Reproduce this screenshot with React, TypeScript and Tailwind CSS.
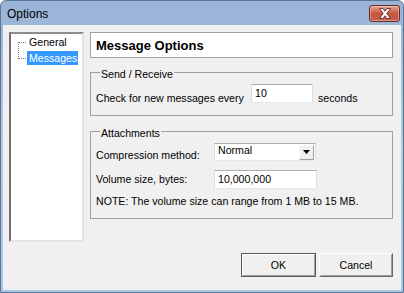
import React from "react";

const font = { fontFamily: '"Liberation Sans", Arial, sans-serif' };

function CloseButton() {
  return (
    <div className="w-[31px] h-[17px] rounded-[3px] border border-[#6b2b23] bg-gradient-to-b from-[#e3a597] via-[#c9553f] to-[#c2604f] flex items-center justify-center shadow-[inset_0_0_0_1px_rgba(255,255,255,0.35)]">
      <svg width="14" height="11" viewBox="0 0 14 11">
        <path
          d="M1.5 0.5 H5 L7 3.3 L9 0.5 H12.5 L8.8 5.5 L12.5 10.5 H9 L7 7.7 L5 10.5 H1.5 L5.2 5.5 Z"
          fill="#ffffff"
          stroke="#5c3030"
          strokeWidth="0.9"
          strokeLinejoin="round"
        />
      </svg>
    </div>
  );
}

function TextBox({ value, w }: { value: string; w: string }) {
  return (
    <div
      className={`${w} h-[19px] bg-white border border-t-[#abadb3] border-l-[#dbdfe6] border-r-[#dbdfe6] border-b-[#e3e9ef] flex items-center pl-[3px] text-[10.6px] leading-[13px]`}
    >
      {value}
    </div>
  );
}

export default function App() {
  return (
    <div
      className="w-[404px] h-[293px] flex flex-col rounded-t-[6px] border border-[#5b7597] bg-gradient-to-b from-[#98b3d6] via-[#b3cbe6] to-[#a9c6e6] overflow-hidden text-black"
      style={font}
    >
      {/* Title bar */}
      <div className="h-[24px] flex items-center justify-between pl-[6px] pr-[3px] pt-[1px]">
        <span className="text-[12px] leading-[14px] text-black">Options</span>
        <CloseButton />
      </div>

      {/* Client area */}
      <div className="mx-[2px] mb-[2px] flex-1 bg-[#f0f0f0] flex flex-col pt-[7px] pl-[6px] pr-[8px] text-[10.6px] leading-[13px]">
        <div className="flex items-start gap-[6px]">
          {/* Tree */}
          <div className="w-[75px] h-[210px] bg-white border-2 border-t-[#8d8d8d] border-l-[#6f6f6f] border-r-[#e3e3e3] border-b-[#e3e3e3] pt-[1px] flex">
            <svg width="16" height="30" viewBox="0 0 16 30" className="shrink-0">
              <g stroke="#7a7a7a" strokeWidth="1" strokeDasharray="1 1" fill="none">
                <line x1="7.5" y1="7" x2="7.5" y2="24" />
                <line x1="8" y1="7.5" x2="16" y2="7.5" />
                <line x1="8" y1="23.5" x2="16" y2="23.5" />
              </g>
            </svg>
            <div className="flex flex-col gap-[2px]">
              <div className="h-[14px] pl-[2px] pr-[2px] flex items-center">General</div>
              <div className="h-[14px] pl-[2px] pr-[1px] flex items-center bg-[#3399ff] text-white">Messages</div>
            </div>
          </div>

          {/* Right column */}
          <div className="w-[303px] flex flex-col">
            <div className="h-[26px] bg-white border border-[#a0a0a0] flex items-center pl-[5px] text-[13px] leading-[15px] font-bold">
              Message Options
            </div>

            <fieldset className="mt-[6px] border border-[#a0a0a0] pl-[5px] pb-[12px]">
              <legend className="ml-[4px] px-[1px] pt-[4px] leading-[13px]">Send / Receive</legend>
              <div className="pt-[3px] flex items-end">
                <span className="w-[149px] mb-[-2px] whitespace-nowrap">Check for new messages every</span>
                <div className="ml-[6px]">
                  <TextBox value="10" w="w-[62px]" />
                </div>
                <span className="ml-[5px] mb-[-2px]">seconds</span>
              </div>
            </fieldset>

            <fieldset className="mt-[7px] border border-[#a0a0a0] pl-[5px] pb-[10px]">
              <legend className="ml-[4px] px-[1px] pt-[4px] leading-[13px]">Attachments</legend>
              <div className="pt-[3px] flex items-end">
                <span className="w-[118px] mb-[-1px]">Compression method:</span>
                <div className="w-[102px] h-[18px] bg-white border border-t-[#abadb3] border-l-[#dbdfe6] border-r-[#dbdfe6] border-b-[#e3e9ef] flex items-center">
                  <span className="flex-1 pl-[3px] mt-[-3px]">Normal</span>
                  <div className="w-[15px] h-[15px] mr-[1px] bg-[#f0f0f0] border border-t-[#f8f8f8] border-l-[#f8f8f8] border-r-[#a0a0a0] border-b-[#a0a0a0] flex items-center justify-center">
                    <svg width="7" height="4" viewBox="0 0 7 4">
                      <path d="M0 0 H7 L3.5 4 Z" fill="#000" />
                    </svg>
                  </div>
                </div>
              </div>
              <div className="mt-[9px] flex items-center">
                <span className="w-[118px]">Volume size, bytes:</span>
                <TextBox value="10,000,000" w="w-[103px]" />
              </div>
              <div className="mt-[6px]">NOTE: The volume size can range from 1 MB to 15 MB.</div>
            </fieldset>
          </div>
        </div>

        {/* Buttons */}
        <div className="mt-[11px] flex justify-end gap-[3px]">
          <div className="w-[75px] h-[24px] border border-[#5a5a5a] flex">
            <div className="flex-1 bg-[#f0f0f0] border border-t-white border-l-white border-r-[#a0a0a0] border-b-[#a0a0a0] flex items-center justify-center">
              OK
            </div>
          </div>
          <div className="w-[74px] h-[24px] border border-t-white border-l-white border-r-[#696969] border-b-[#696969] flex">
            <div className="flex-1 bg-[#f0f0f0] border border-t-[#f0f0f0] border-l-[#f0f0f0] border-r-[#a0a0a0] border-b-[#a0a0a0] flex items-center justify-center">
              Cancel
            </div>
          </div>
        </div>
      </div>
    </div>
  );
}
